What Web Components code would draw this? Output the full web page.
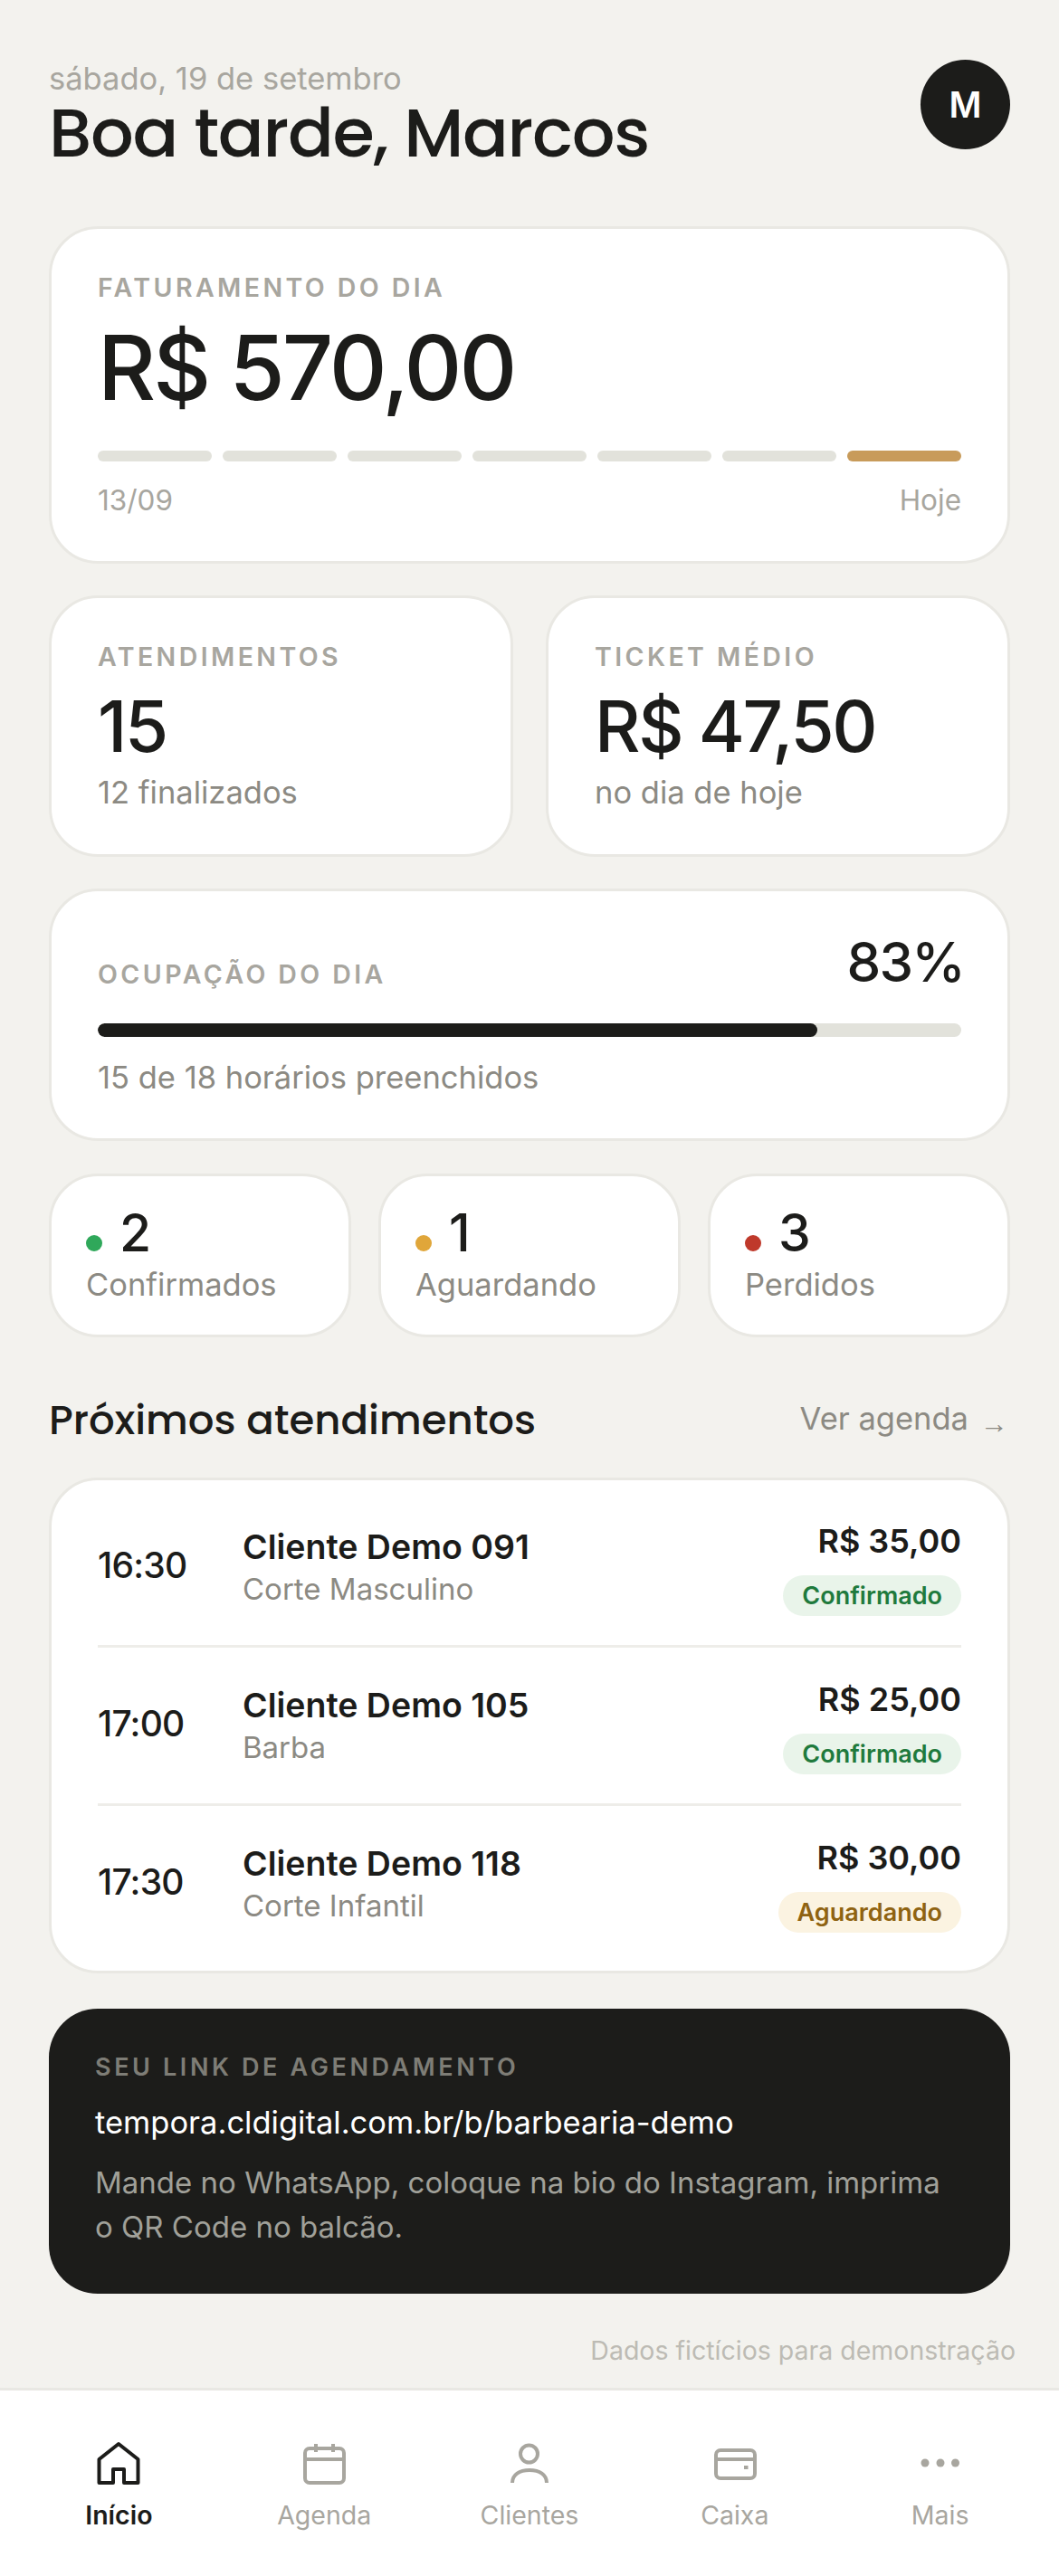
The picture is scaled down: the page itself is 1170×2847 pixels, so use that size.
<!DOCTYPE html>
<html lang="pt-BR"><head><meta charset="utf-8"><title>Início</title>
<style>
html,body{margin:0;padding:0;background:#f3f2ee;}
body{font-family:Inter,"Liberation Sans",sans-serif;color:#1c1c1a;width:1170px;height:2847px;overflow:hidden;}
dash-screen{display:block}
</style></head><body>
<dash-screen>
  <dash-header date="sábado, 19 de setembro" title="Boa tarde, Marcos" initial="M"></dash-header>
  <revenue-card label="FATURAMENTO DO DIA" value="R$ 570,00" from="13/09" to="Hoje"></revenue-card>
  <two-col>
    <kpi-card label="ATENDIMENTOS" value="15" note="12 finalizados"></kpi-card>
    <kpi-card label="TICKET MÉDIO" value="R$ 47,50" note="no dia de hoje"></kpi-card>
  </two-col>
  <occupancy-card label="OCUPAÇÃO DO DIA" value="83%" note="15 de 18 horários preenchidos" pct="83.33"></occupancy-card>
  <three-col>
    <count-card color="#2fa85a" value="2" label="Confirmados"></count-card>
    <count-card color="#e0a63a" value="1" label="Aguardando"></count-card>
    <count-card color="#bf392b" value="3" label="Perdidos"></count-card>
  </three-col>
  <section-head title="Próximos atendimentos" link="Ver agenda"></section-head>
  <appt-list>
    <appt-row time="16:30" name="Cliente Demo 091" service="Corte Masculino" price="R$ 35,00" status="Confirmado" kind="ok"></appt-row>
    <appt-row time="17:00" name="Cliente Demo 105" service="Barba" price="R$ 25,00" status="Confirmado" kind="ok"></appt-row>
    <appt-row time="17:30" name="Cliente Demo 118" service="Corte Infantil" price="R$ 30,00" status="Aguardando" kind="wait"></appt-row>
  </appt-list>
  <link-card label="SEU LINK DE AGENDAMENTO" url="tempora.cldigital.com.br/b/barbearia-demo" text="Mande no WhatsApp, coloque na bio do Instagram, imprima o QR Code no balcão."></link-card>
  <demo-note>Dados fictícios para demonstração</demo-note>
  <bottom-nav>
    <nav-item label="Início" active><svg viewBox="0 0 54 54" width="54" height="54" fill="none" stroke="currentColor" stroke-width="4" stroke-linejoin="round"><path d="M27 5 5.500 22V48H21V33H33V48H48.500V22z"/></svg></nav-item>
    <nav-item label="Agenda"><svg viewBox="0 0 54 54" width="54" height="54" fill="none" stroke="currentColor" stroke-width="4" stroke-linejoin="round"><rect x="6" y="10" width="43" height="38" rx="5"/><path d="M6 22h43M18 5v9M37 5v9"/></svg></nav-item>
    <nav-item label="Clientes"><svg viewBox="0 0 54 54" width="54" height="54" fill="none" stroke="currentColor" stroke-width="4"><circle cx="26.500" cy="16" r="9.500"/><path d="M8 48C8 39 16 34 27 34S46 39 46 48"/></svg></nav-item>
    <nav-item label="Caixa"><svg viewBox="0 0 54 54" width="54" height="54" fill="none" stroke="currentColor" stroke-width="4" stroke-linejoin="round"><rect x="6" y="12" width="43" height="31" rx="5"/><path d="M6 22h43"/><rect x="37" y="29" width="4.500" height="4" fill="currentColor" stroke="none"/></svg></nav-item>
    <nav-item label="Mais"><svg viewBox="0 0 54 54" width="54" height="54" fill="currentColor"><circle cx="10" cy="26" r="4.500"/><circle cx="27" cy="26" r="4.500"/><circle cx="43.500" cy="26" r="4.500"/></svg></nav-item>
  </bottom-nav>
</dash-screen>
<script>
const LABEL='font:600 28.5px/33px Inter,sans-serif;letter-spacing:3.42px;color:#a8a69f;';
const CARD=':host{display:block;box-sizing:border-box;background:#fff;border:3px solid #e9e8e3;border-radius:54px;}';
function define(name,render){
  customElements.define(name,class extends HTMLElement{
    connectedCallback(){
      if(this.shadowRoot)return;
      const a=n=>this.getAttribute(n)||'';
      this.attachShadow({mode:'open'}).innerHTML=render(a,this);
    }
  });
}
define('dash-header',a=>`<style>
:host{display:flex;justify-content:space-between;align-items:flex-start;padding:66px 54px 0;height:250px;box-sizing:border-box}
.d{font:400 34.5px/42px Inter,sans-serif;color:#a8a69f}
h1{margin:0;font:500 75px/78px Poppins,Inter,sans-serif;letter-spacing:-1.3px;color:#1c1c1a}
.a{width:99px;height:99px;border-radius:50%;background:#1c1c1a;color:#fff;font:600 39px/99px Inter,sans-serif;text-align:center}
</style><div><div class="d">${a('date')}</div><h1>${a('title')}</h1></div><div class="a">${a('initial')}</div>`);
define('revenue-card',a=>`<style>${CARD}
:host{margin:0 54px;height:373px;padding:48px 51px 0}
.l{${LABEL}}
.v{font:500 99px/120px Inter,sans-serif;letter-spacing:-2.97px;margin-top:12px;color:#1c1c1a}
.b{display:grid;grid-template-columns:repeat(7,1fr);gap:12px;margin-top:32px}
.b i{height:12px;border-radius:6px;background:#e2e2db}
.b i:last-child{background:#c89b5a}
.f{display:flex;justify-content:space-between;font:400 31.5px/36px Inter,sans-serif;color:#a8a69f;margin-top:25px}
</style><div class="l">${a('label')}</div><div class="v">${a('value')}</div>
<div class="b"><i></i><i></i><i></i><i></i><i></i><i></i><i></i></div>
<div class="f"><span>${a('from')}</span><span>${a('to')}</span></div>`);
define('two-col',()=>`<style>:host{display:grid;grid-template-columns:1fr 1fr;gap:36px;margin:35px 54px 0}</style><slot></slot>`);
define('three-col',()=>`<style>:host{display:grid;grid-template-columns:repeat(3,1fr);gap:30px;margin:36px 54px 0}</style><slot></slot>`);
define('kpi-card',a=>`<style>${CARD}
:host{height:289px;padding:48px 51px 0}
.l{${LABEL}}
.v{font:500 78px/96px Inter,sans-serif;letter-spacing:-2.34px;margin-top:13px;color:#1c1c1a}
.n{font:400 34.5px/42px Inter,sans-serif;color:#8c8a83;margin-top:4px}
</style><div class="l">${a('label')}</div><div class="v">${a('value')}</div><div class="n">${a('note')}</div>`);
define('occupancy-card',a=>`<style>${CARD}
:host{margin:35px 54px 0;height:279px;padding:39px 51px 0}
.t{display:flex;justify-content:space-between;align-items:flex-end}
.l{${LABEL}padding-bottom:9px}
.v{font:500 60px/78px Inter,sans-serif;letter-spacing:-1.8px;color:#1c1c1a;margin-right:-3px}
.b{height:15px;border-radius:8px;background:#e2e2db;margin-top:29px;overflow:hidden}
.b i{display:block;height:100%;border-radius:8px;background:#1c1c1a}
.n{font:400 34.5px/42px Inter,sans-serif;color:#8c8a83;margin-top:24px}
</style><div class="t"><div class="l">${a('label')}</div><div class="v">${a('value')}</div></div>
<div class="b"><i style="width:${a('pct')}%"></i></div><div class="n">${a('note')}</div>`);
define('count-card',a=>`<style>${CARD}
:host{height:181px;padding:30px 38px 0}
.t{display:flex;align-items:baseline;gap:19px}
.d{width:18px;height:18px;border-radius:50%;margin-bottom:2px;background:${a('color')}}
.v{font:500 57px/66px Inter,sans-serif;color:#1c1c1a}
.n{font:400 34.5px/42px Inter,sans-serif;color:#8c8a83;margin-top:3px}
</style><div class="t"><span class="d"></span><span class="v">${a('value')}</span></div><div class="n">${a('label')}</div>`);
define('section-head',a=>`<style>
:host{display:flex;justify-content:space-between;align-items:center;margin:60px 54px 0;height:95px;padding-bottom:32px;box-sizing:border-box}
h2{margin:0;font:500 45px/60px Poppins,Inter,sans-serif;color:#1c1c1a}
.l{display:flex;align-items:flex-start;height:42px;margin-bottom:4px;font:400 34.5px/42px Inter,sans-serif;color:#8c8a83}
.l span{font:400 31px/42px "Liberation Sans",sans-serif;margin:6px 2px 0 13px}
</style><h2>${a('title')}</h2><div class="l">${a('link')}<span>→</span></div>`);
define('appt-list',()=>`<style>${CARD}
:host{margin:0 54px;padding:10px 51px 10px}
::slotted(appt-row:not(:last-child)){border-bottom:3px solid #eeede9;height:175px}
</style><slot></slot>`);
define('appt-row',a=>`<style>
:host{display:grid;grid-template-columns:160px 1fr auto;align-items:center;height:172px;padding-bottom:4px;box-sizing:border-box}
.t{font:500 39px/50px Inter,sans-serif;letter-spacing:-.78px;color:#1c1c1a}
.g{padding-top:2px}
.n{font:600 37.5px/48px Inter,sans-serif;color:#1c1c1a}
.s{font:400 33px/42px Inter,sans-serif;color:#8c8a83;margin-top:1px}
.r{display:flex;flex-direction:column;align-items:flex-end;gap:14px;padding-top:5px}
.p{font:600 36px/48px Inter,sans-serif;color:#1c1c1a}
status-badge{display:block}
</style><div class="t">${a('time')}</div><div class="g"><div class="n">${a('name')}</div><div class="s">${a('service')}</div></div>
<div class="r"><div class="p">${a('price')}</div><status-badge kind="${a('kind')}">${a('status')}</status-badge></div>`);
define('status-badge',a=>{const ok=a('kind')==='ok';return `<style>
:host{display:block;height:45px;border-radius:23px;padding:0 21px;background:${ok?'#e9f4ea':'#fbf3e1'};color:${ok?'#1f7a3d':'#8f6312'};font:600 27px/45px Inter,sans-serif}
</style><slot></slot>`});
define('link-card',a=>`<style>
:host{display:block;box-sizing:border-box;margin:39px 54px 0;height:315px;background:#1c1c1a;border-radius:54px;padding:48px 51px 0}
.l{font:600 27px/33px Inter,sans-serif;letter-spacing:3.6px;color:#7e7d76}
.u{font:400 34.5px/48px Inter,sans-serif;color:#fff;margin-top:21px}
.t{font:400 33px/49px Inter,sans-serif;color:#a0a099;margin-top:18px}
</style><div class="l">${a('label')}</div><div class="u">${a('url')}</div><div class="t">${a('text')}</div>`);
define('demo-note',()=>`<style>
:host{display:block;margin:42px 48px 0 0;text-align:right;font:400 28.5px/42px Inter,sans-serif;color:#bdbbb4}
</style><slot></slot>`);
define('bottom-nav',()=>`<style>
:host{display:grid;grid-template-columns:repeat(5,1fr);box-sizing:border-box;margin-top:20px;height:230px;background:#fff;border-top:3px solid #e9e8e3;padding:54px 18px 0}
</style><slot></slot>`);
define('nav-item',(a,el)=>{const on=el.hasAttribute('active');return `<style>
:host{display:flex;flex-direction:column;align-items:center;color:${on?'#1c1c1a':'#a8a69f'}}
.i{width:54px;height:54px}
.l{font:${on?600:400} 28.5px/33px Inter,sans-serif;margin-top:13px}
</style><div class="i"><slot></slot></div><div class="l">${a('label')}</div>`});
define('dash-screen',()=>`<style>:host{display:block}</style><slot></slot>`);
</script>
</body></html>
